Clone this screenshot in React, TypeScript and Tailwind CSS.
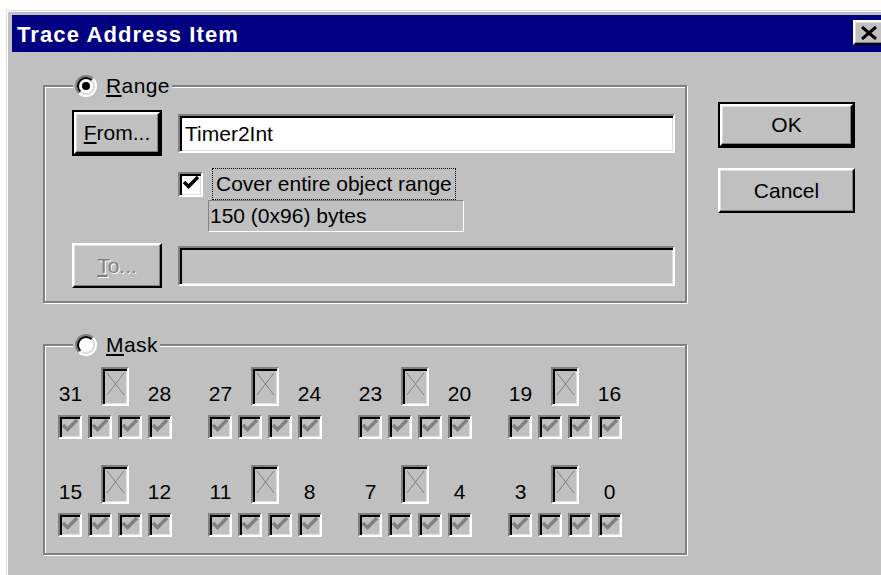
import * as React from "react";

// classic 3D edges
const raised =
  "border-2 border-t-white border-l-white border-r-black border-b-black shadow-[inset_-1px_-1px_0_#808080,inset_1px_1px_0_#dfdfdf]";
const sunken =
  "border-2 border-t-[#808080] border-l-[#808080] border-b-white border-r-white shadow-[inset_2px_2px_0_#000,inset_-1px_-1px_0_#dfdfdf]";
const etched =
  "border-2 border-[#808080] shadow-[inset_1px_1px_0_#fff,1px_1px_0_#fff]";

const maskRows: [number, number][][] = [
  [
    [31, 28],
    [27, 24],
    [23, 20],
    [19, 16],
  ],
  [
    [15, 12],
    [11, 8],
    [7, 4],
    [3, 0],
  ],
];

function Check({ color }: { color: string }) {
  return (
    <svg width="20" height="20" viewBox="0 0 20 20">
      <path d="M3 8 L7.5 12.5 L17 3" fill="none" stroke={color} strokeWidth="3.5" />
    </svg>
  );
}

function Radio({ checked }: { checked?: boolean }) {
  return (
    <div className="w-[22px] h-[22px] rounded-full border-2 border-t-[#808080] border-l-[#808080] border-b-white border-r-white">
      <div className="w-full h-full rounded-full border-2 border-t-black border-l-black border-b-[#dfdfdf] border-r-[#dfdfdf] bg-white flex items-center justify-center">
        {checked && <div className="w-[8px] h-[8px] rounded-full bg-black" />}
      </div>
    </div>
  );
}

function Legend({ label, checked }: { label: string; checked?: boolean }) {
  return (
    <div className="absolute -top-[13px] left-[28px] h-[24px] flex items-center bg-[#c0c0c0] px-[2px]">
      <Radio checked={checked} />
      <span className="ml-[9px] leading-[24px] tracking-[0.4px]">
        <span className="underline underline-offset-2">{label[0]}</span>
        {label.slice(1)}
      </span>
    </div>
  );
}

function DefaultButton({ children, className }: { children: React.ReactNode; className: string }) {
  return (
    <div className={"border-2 border-black " + className}>
      <div className={"w-full h-full flex items-center justify-center " + raised}>{children}</div>
    </div>
  );
}

function MaskBox() {
  return (
    <div className={"w-[24px] h-[24px] flex items-center justify-center " + sunken}>
      <Check color="#808080" />
    </div>
  );
}

function BitGroup({ hi, lo }: { hi: number; lo: number }) {
  return (
    <div className="w-[114px] flex flex-col">
      <div className="h-[39px] flex items-end">
        <span className="w-[26px] text-center leading-[24px]">{hi}</span>
        <div className={"ml-[18px] w-[28px] h-[39px] " + sunken}>
          <svg width="24" height="35" viewBox="0 0 24 35">
            <path d="M4 4 L21 26 M21 4 L4 26" stroke="#808080" strokeWidth="1" />
          </svg>
        </div>
        <span className="ml-[18px] w-[26px] text-center leading-[24px]">{lo}</span>
      </div>
      <div className="mt-[9px] flex gap-[6px]">
        <MaskBox />
        <MaskBox />
        <MaskBox />
        <MaskBox />
      </div>
    </div>
  );
}

export default function App() {
  return (
    <div className="w-[881px] h-[575px] overflow-hidden bg-white font-['Liberation_Sans',Arial,sans-serif] text-[21px] text-black">
      <div className="ml-[6px] mt-[10px] w-[890px] h-[600px] bg-[#c0c0c0] border-t border-l border-[#dfdfdf] shadow-[inset_1px_1px_0_#fff] pt-[4px] pl-[5px] pr-[5px]">
        {/* Title bar */}
        <div className="flex h-[37px] bg-[#000080]">
          <div className="pl-[5px] pt-[7px] leading-[26px] text-[22px] font-bold text-white tracking-[1.1px]">
            Trace Address Item
          </div>
          <div className={"ml-auto mr-[6px] mt-[5px] w-[32px] h-[25px] bg-[#c0c0c0] flex items-center justify-center " + raised}>
            <svg width="16" height="14" viewBox="0 0 16 14">
              <path d="M1 1 L15 13 M15 1 L1 13" stroke="#000" strokeWidth="3" />
            </svg>
          </div>
        </div>

        {/* Body */}
        <div className="flex pt-[33px] pl-[31px]">
          <div className="w-[644px] flex flex-col gap-[41px]">
            {/* Range */}
            <div className={"relative h-[218px] pt-[23px] pl-[27px] pr-[10px] " + etched}>
              <Legend label="Range" checked />
              <div className="flex items-center">
                <DefaultButton className="w-[90px] h-[46px]">
                  <span>
                    <span className="underline underline-offset-2">F</span>rom...
                  </span>
                </DefaultButton>
                <div className={"ml-[16px] w-[497px] h-[39px] bg-white pl-[5px] leading-[35px] " + sunken}>
                  Timer2Int
                </div>
              </div>
              <div className="ml-[106px] mt-[12px]">
                <div className="flex items-center h-[32px]">
                  <div className={"w-[25px] h-[25px] bg-white flex items-center justify-center " + sunken}>
                    <Check color="#000" />
                  </div>
                  <div className="ml-[9px] h-[32px] px-[3px] border border-dotted border-black leading-[30px]">
                    Cover entire object range
                  </div>
                </div>
                <div className="ml-[30px] w-[256px] h-[32px] border border-t-[#808080] border-l-[#808080] border-b-white border-r-white pl-[1px] leading-[30px]">
                  150 (0x96) bytes
                </div>
              </div>
              <div className="flex items-center mt-[11px]">
                <div className={"w-[90px] h-[45px] flex items-center justify-center text-[#808080] [text-shadow:1px_1px_0_#fff] " + raised}>
                  <span>
                    <span className="underline underline-offset-2">T</span>o...
                  </span>
                </div>
                <div className={"ml-[16px] w-[497px] h-[40px] bg-[#c0c0c0] " + sunken} />
              </div>
            </div>

            {/* Mask */}
            <div className={"relative h-[211px] pt-[21px] pl-[13px] " + etched}>
              <Legend label="Mask" />
              <div className="flex flex-col gap-[26px]">
                {maskRows.map((row, i) => (
                  <div key={i} className="flex gap-[36px]">
                    {row.map(([hi, lo]) => (
                      <BitGroup key={hi} hi={hi} lo={lo} />
                    ))}
                  </div>
                ))}
              </div>
            </div>
          </div>

          {/* Dialog buttons */}
          <div className="ml-[31px] pt-[17px] flex flex-col gap-[20px]">
            <DefaultButton className="w-[137px] h-[46px]">OK</DefaultButton>
            <div className={"w-[137px] h-[45px] flex items-center justify-center " + raised}>Cancel</div>
          </div>
        </div>
      </div>
    </div>
  );
}
